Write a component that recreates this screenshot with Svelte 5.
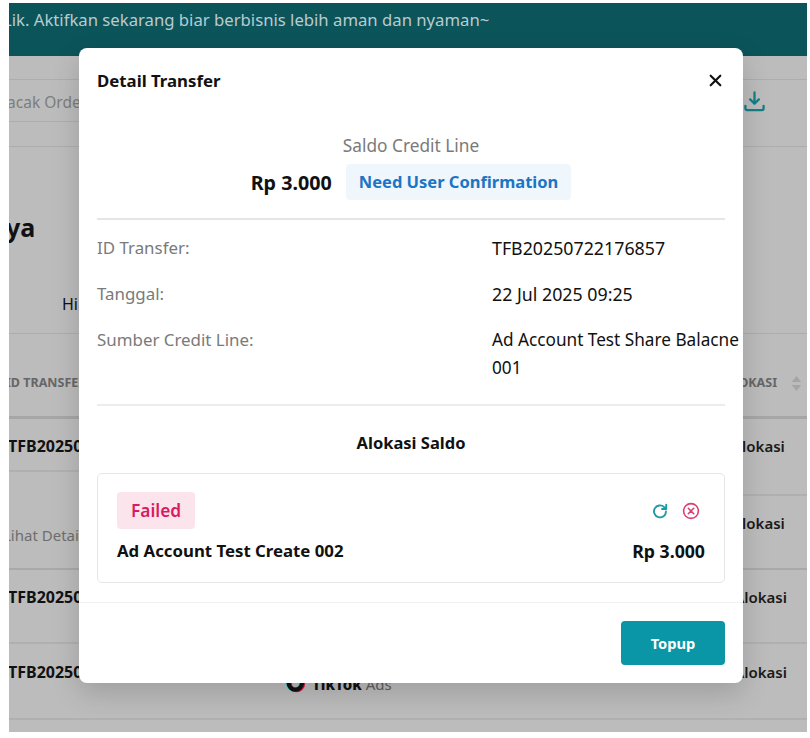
<script>
  const details = [
    { label: 'ID Transfer:', value: 'TFB20250722176857', digits: true },
    { label: 'Tanggal:', value: '22 Jul 2025 09:25', digits: true },
    { label: 'Sumber Credit Line:', value: 'Ad Account Test Share Balacne 001', digits: false }
  ];
</script>

<div class="shot">
  <div class="banner">Lik. Aktifkan sekarang biar berbisnis lebih aman dan nyaman~</div>

  <div class="toolbar">
    <div class="search">Lacak Order</div>
    <svg class="download" viewBox="0 0 24 24" fill="none" stroke="#157f86" stroke-width="2.4" stroke-linecap="round" stroke-linejoin="round">
      <path d="M12 2.500V14M7.500 9.800 12 14.300l4.500-4.500M2.500 16.500v2.500a2 2 0 0 0 2 2h15a2 2 0 0 0 2-2v-2.500" />
    </svg>
  </div>

  <div class="heading">
    <div class="title">ya</div>
    <div class="tab">Hi</div>
  </div>

  <div class="thead">
    <span class="th-left">ID TRANSFER</span>
    <span class="th-right">ALOKASI
      <svg class="sort" viewBox="0 0 10 16" fill="#a5a5a5"><path d="M5 1 9.500 6.500H.5zM5 15 .5 9.500h9z" /></svg>
    </span>
  </div>

  <div class="row row1">
    <div class="left-stack">
      <div class="id">TFB20250722</div>
      <div class="split"></div>
      <div class="more">Lihat Detail</div>
    </div>
    <div class="right-stack">
      <div class="alok">Alokasi</div>
      <div class="split two"></div>
      <div class="alok second">Alokasi</div>
    </div>
  </div>

  <div class="row row2">
    <span class="id">TFB20250722</span>
    <span class="alok">Alokasi</span>
  </div>

  <div class="row row3">
    <span class="id">TFB20250722</span>
    <span class="brand">
      <svg class="note" viewBox="-3 0 18 20" fill="none" stroke-width="3.200">
        <path d="M9 1v11a5 5 0 1 1-5-5" stroke="#e8124d" transform="translate(.8 .4)" />
        <path d="M9 1v11a5 5 0 1 1-5-5" stroke="#25d4d8" transform="translate(-.5 -.2)" />
        <path d="M9 1v11a5 5 0 1 1-5-5" stroke="#111" />
      </svg>
      <b>TikTok</b><span class="ads">Ads</span>
    </span>
    <span class="alok">Alokasi</span>
  </div>

  <section class="modal">
    <header class="m-head">
      <h2>Detail Transfer</h2>
      <svg class="close" viewBox="0 0 14 14" fill="none" stroke="#111" stroke-width="2" stroke-linecap="round">
        <path d="M2.500 2.500l9 9M11.500 2.500l-9 9" />
      </svg>
    </header>

    <div class="summary">
      <div class="sum-label">Saldo Credit Line</div>
      <div class="sum-row">
        <span class="amount">Rp 3.000</span>
        <span class="status">Need User Confirmation</span>
      </div>
    </div>

    <dl class="details">
      {#each details as d}
        <div class="d-row">
          <dt>{d.label}</dt>
          <dd class:digits={d.digits}>{d.value}</dd>
        </div>
      {/each}
    </dl>

    <h3>Alokasi Saldo</h3>

    <div class="card">
      <div class="card-top">
        <span class="failed">Failed</span>
        <span class="actions">
          <svg class="retry" viewBox="0 0 16 16" fill="none" stroke="#1d9aa6" stroke-width="1.900" stroke-linecap="round" stroke-linejoin="round">
            <path d="M14 8.500a6 6 0 1 1-1.800-4.400L14 5.800" />
            <path d="M14.200 1.800v4.200H10" />
          </svg>
          <svg class="cancel" viewBox="0 0 18 18" fill="none" stroke="#d9406f" stroke-width="1.600" stroke-linecap="round">
            <circle cx="9" cy="9" r="7.400" />
            <path d="M6.300 6.300l5.400 5.400M11.700 6.300l-5.400 5.400" />
          </svg>
        </span>
      </div>
      <div class="card-bottom">
        <span>Ad Account Test Create 002</span>
        <span class="card-amount">Rp 3.000</span>
      </div>
    </div>

    <footer class="m-foot">
      <button type="button">Topup</button>
    </footer>
  </section>
</div>

<style>
  :global(body) {
    margin: 0;
    background: #fff;
  }

  .shot {
    position: relative;
    box-sizing: border-box;
    width: 798px;
    height: 729px;
    margin: 3px 0 0 9px;
    overflow: hidden;
    background: #bcbcbc;
    font-family: "Noto Sans", "Open Sans", sans-serif;
    font-size: 16px;
    color: #111;
  }

  .banner {
    height: 53px;
    box-sizing: border-box;
    padding-top: 5px;
    text-indent: -6px;
    background: #0b545a;
    color: #b9cbcf;
    font-size: 16.700px;
    line-height: 24px;
    white-space: nowrap;
  }

  .toolbar {
    display: flex;
    align-items: center;
    justify-content: flex-end;
    height: 66px;
    padding-right: 41px;
    margin-top: 23px;
    border-top: 1px solid #adadad;
    border-bottom: 1px solid #adadad;
  }

  .search {
    flex: 1;
    align-self: flex-start;
    height: 41px;
    margin-left: -10px;
    border-bottom: 1px solid #adadad;
    line-height: 44px;
    color: #7c7c7c;
    font-size: 15.500px;
    white-space: nowrap;
  }

  .download {
    width: 23px;
    height: 23px;
    margin-top: -23px;
  }

  .heading {
    display: flex;
    flex-direction: column;
    box-sizing: border-box;
    height: 187px;
    border-bottom: 1px solid #adadad;
  }

  .title {
    margin: 64px 0 0 -3px;
    font-size: 25px;
    font-weight: 700;
    line-height: 32px;
  }

  .tab {
    margin: 49px 0 0 53px;
    line-height: 24px;
  }

  .thead {
    display: flex;
    justify-content: space-between;
    box-sizing: border-box;
    height: 85px;
    padding-top: 40px;
    border-bottom: 3px solid #a6a6a6;
    font-size: 12.500px;
    font-weight: 700;
    color: #666;
    line-height: 18px;
  }

  .th-left {
    margin-left: -3px;
  }

  .th-right {
    display: flex;
    align-items: center;
    gap: 14px;
    height: 18px;
    padding-right: 5px;
  }

  .sort {
    width: 11px;
    height: 17px;
  }

  .row {
    display: flex;
    justify-content: space-between;
    box-sizing: border-box;
    border-bottom: 2px solid #a9a9a9;
  }

  .row1 {
    height: 151px;
  }

  .left-stack,
  .right-stack {
    display: flex;
    flex-direction: column;
  }

  .left-stack .id {
    box-sizing: border-box;
    height: 51px;
    padding-top: 15px;
  }

  .split {
    width: 70px;
    height: 2px;
    background: #b0b0b0;
  }

  .split.two {
    width: 75px;
    margin-top: 36px;
  }

  .more {
    margin: 51px 0 0 -6px;
    color: #6e6e6e;
    font-size: 15px;
    line-height: 24px;
    white-space: nowrap;
  }

  .id {
    margin-left: -1px;
    font-size: 16px;
    font-weight: 700;
    line-height: 24px;
    white-space: nowrap;
  }

  .alok {
    padding-right: 20px;
    color: #1a1a1a;
    font-size: 15px;
    font-weight: 600;
    line-height: 24px;
  }

  .right-stack .alok {
    margin-top: 15px;
  }

  .right-stack .second {
    margin-top: 15px;
  }

  .row2 {
    height: 74px;
    padding-top: 15px;
    border-bottom-color: #b0b0b0;
  }

  .row3 {
    position: relative;
    height: 76px;
    padding-top: 16px;
    border-bottom-color: #b0b0b0;
  }

  .brand {
    position: absolute;
    left: 277px;
    top: 23px;
    display: flex;
    align-items: flex-start;
    font-size: 15px;
    line-height: 22px;
  }

  .note {
    width: 24px;
    height: 26.700px;
    margin-right: 2px;
  }

  .brand b {
    margin-top: 6px;
    font-weight: 800;
  }

  .ads {
    margin: 6px 0 0 4px;
    color: #5e5e5e;
  }

  .modal {
    position: absolute;
    left: 70px;
    top: 45px;
    display: flex;
    flex-direction: column;
    box-sizing: border-box;
    width: 664px;
    height: 635px;
    background: #fff;
    border-radius: 8px;
    box-shadow: 0 10px 28px rgba(0, 0, 0, 0.16);
  }

  .m-head {
    display: flex;
    align-items: center;
    justify-content: space-between;
    height: 24px;
    padding: 21px 20px 0 18px;
  }

  h2 {
    margin: 0;
    color: #111;
    font-size: 16.800px;
    font-weight: 700;
    line-height: 24px;
  }

  .close {
    width: 15px;
    height: 15px;
    margin-top: -2px;
  }

  .summary {
    margin: 41px 18px 0;
    padding-bottom: 18px;
    border-bottom: 2px solid #e6e6e6;
    text-align: center;
  }

  .sum-label {
    color: #7a7a7a;
    font-size: 17.300px;
    line-height: 24px;
  }

  .sum-row {
    display: flex;
    justify-content: center;
    align-items: center;
    gap: 14px;
    margin-top: 6px;
  }

  .amount {
    font-size: 19.700px;
    font-weight: 700;
  }

  .status {
    height: 36px;
    padding: 0 13px;
    border-radius: 4px;
    background: #eff6fc;
    color: #1c74c4;
    font-size: 16.500px;
    font-weight: 700;
    line-height: 36px;
  }

  .details {
    display: flex;
    flex-direction: column;
    gap: 18px;
    margin: 0 18px;
    padding: 14px 0 22px;
    border-bottom: 2px solid #ececec;
  }

  .d-row {
    display: flex;
    line-height: 28px;
  }

  dt {
    width: 395px;
    color: #7a7a7a;
    font-size: 16.900px;
  }

  dd {
    flex: 1;
    margin: 0 -16px 0 0;
    color: #111;
    font-size: 17.200px;
  }

  dd.digits {
    font-size: 17.800px;
  }

  h3 {
    margin: 24px 0 0;
    font-size: 16.500px;
    font-weight: 700;
    line-height: 26px;
    text-align: center;
  }

  .card {
    box-sizing: border-box;
    height: 110px;
    margin: 17px 18px 0;
    padding: 18px 19px 0;
    border: 1px solid #e6e6e6;
    border-radius: 5px;
  }

  .card-top {
    display: flex;
    align-items: center;
    justify-content: space-between;
  }

  .failed {
    display: inline-block;
    height: 37px;
    padding: 0 14px;
    border-radius: 4px;
    background: #fce4ec;
    color: #d81b60;
    font-size: 17.300px;
    font-weight: 600;
    line-height: 37px;
  }

  .actions {
    display: flex;
    align-items: center;
    gap: 14px;
    padding-right: 5px;
  }

  .retry {
    width: 16px;
    height: 16px;
  }

  .cancel {
    width: 18px;
    height: 18px;
  }

  .card-bottom {
    display: flex;
    justify-content: space-between;
    margin-top: 10px;
    font-size: 16.800px;
    font-weight: 700;
    line-height: 24px;
  }

  .card-amount {
    font-size: 17.700px;
  }

  .m-foot {
    display: flex;
    justify-content: flex-end;
    margin-top: 19px;
    padding: 18px 18px 0;
    border-top: 1px solid #f0f0f0;
  }

  button {
    width: 104px;
    height: 44px;
    border: 0;
    border-radius: 4px;
    background: #0a96a6;
    color: #fff;
    font: 700 14.700px "Noto Sans", sans-serif;
  }
</style>
